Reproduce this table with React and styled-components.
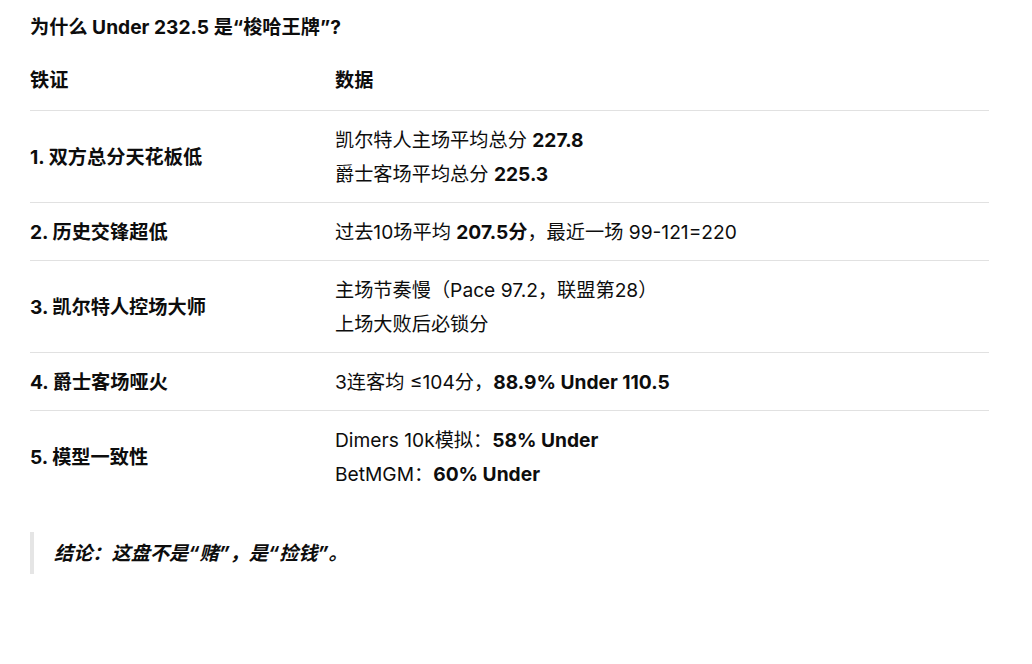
import React from "react";
import styled, { createGlobalStyle } from "styled-components";

const Global = createGlobalStyle`
  html, body { margin: 0; padding: 0; background: #ffffff; }
  body {
    font-family: Inter, "Noto Sans CJK SC", "Noto Sans", sans-serif;
    color: #0d0d0d;
    -webkit-font-smoothing: antialiased;
  }
`;

const Page = styled.main`
  width: 959px;
  padding: 10px 0 0 30px;
  font-size: 19.2px;
  line-height: 34px;
`;

const Title = styled.h3`
  margin: 0 0 6px;
  font-size: 19.2px;
  line-height: 34px;
  font-weight: 700;
`;

const Table = styled.div`
  display: flex;
  flex-direction: column;
`;

const Row = styled.div`
  display: grid;
  grid-template-columns: 305px 1fr;
  align-items: center;
  padding: ${(p) => (p.$head ? "13px 0 13px" : "12px 0 11px")};
  border-bottom: ${(p) => (p.$last ? "none" : "1px solid #e1e1e1")};
`;

const Cell = styled.div`
  font-weight: ${(p) => (p.$bold ? 700 : 400)};
`;

const Line = styled.div``;

const B = styled.strong`
  font-weight: 700;
`;

const Quote = styled.blockquote`
  margin: 30px 0 0;
  padding: 4px 0 4px 20px;
  border-left: 4px solid #e5e5e5;
  font-weight: 700;
  font-style: italic;
`;

const rows = [
  {
    k: "1. 双方总分天花板低",
    v: [
      <>凯尔特人主场平均总分 <B>227.8</B></>,
      <>爵士客场平均总分 <B>225.3</B></>,
    ],
  },
  {
    k: "2. 历史交锋超低",
    v: [<>过去10场平均 <B>207.5分</B>，最近一场 99-121=220</>],
  },
  {
    k: "3. 凯尔特人控场大师",
    v: [<>主场节奏慢（Pace 97.2，联盟第28）</>, <>上场大败后必锁分</>],
  },
  {
    k: "4. 爵士客场哑火",
    v: [<>3连客均 ≤104分，<B>88.9% Under 110.5</B></>],
  },
  {
    k: "5. 模型一致性",
    v: [
      <>Dimers 10k模拟：<B>58% Under</B></>,
      <>BetMGM：<B>60% Under</B></>,
    ],
  },
];

export default function App() {
  return (
    <>
      <Global />
      <Page>
        <Title>为什么 Under 232.5 是“梭哈王牌”?</Title>
        <Table>
          <Row $head>
            <Cell $bold>铁证</Cell>
            <Cell $bold>数据</Cell>
          </Row>
          {rows.map((r, i) => (
            <Row key={i} $last={i === rows.length - 1}>
              <Cell $bold>{r.k}</Cell>
              <Cell>
                {r.v.map((l, j) => (
                  <Line key={j}>{l}</Line>
                ))}
              </Cell>
            </Row>
          ))}
        </Table>
        <Quote>结论：这盘不是“赌”，是“捡钱”。</Quote>
      </Page>
    </>
  );
}
